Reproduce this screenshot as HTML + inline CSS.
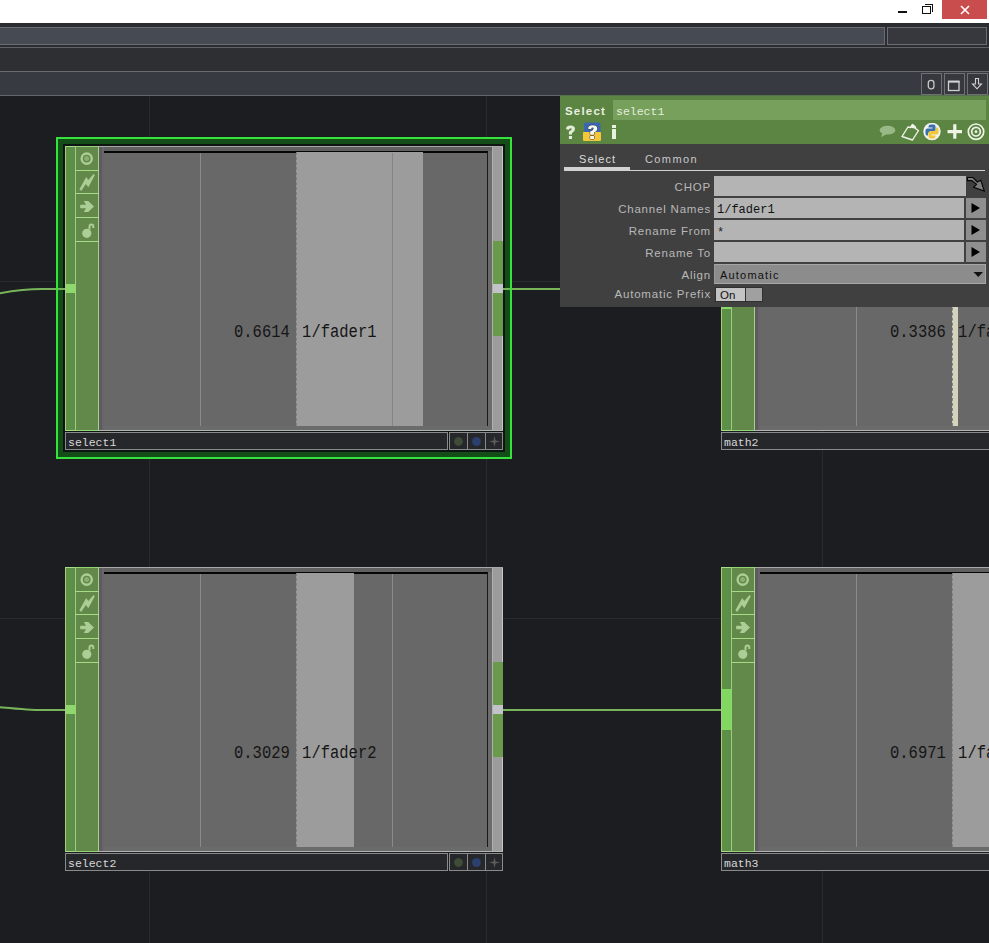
<!DOCTYPE html>
<html><head><meta charset="utf-8">
<style>
*{margin:0;padding:0;box-sizing:border-box}
html,body{width:989px;height:943px;overflow:hidden;background:#1c1d21;font-family:"Liberation Sans",sans-serif;-webkit-font-smoothing:antialiased}
.a{position:absolute}
#title{left:0;top:0;width:989px;height:23px;background:#fff}
.gl{background:#2a2b30}
.node{position:absolute;width:438px;height:304px}
.node .body{position:absolute;left:0;top:0;width:438px;height:285px;background:#6b6b6b;border-top:1px solid #a8a8a8;border-bottom:1px solid #b4b4b4}
.node .ls{position:absolute;left:0;top:0;width:11px;height:285px;background:linear-gradient(90deg,#5e9040 0 3px,#5a9048 3px 6px,#608a50 6px);border:1px solid #a6dc88;border-left-color:#a8c890;border-right:none}
.node .gb{position:absolute;left:34px;top:1px;width:5px;height:283px;background:linear-gradient(90deg,#5c5c60 0 2px,#5e5a58 2px 3px,#68666c 3px)}
.node .is{position:absolute;left:10px;top:0;width:24px;height:285px;background:#62884a;border:1px solid #94d474;border-right-color:#a8d090}
.node .cell{position:absolute;left:10px;width:24px;height:1px;background:#a6dc88}
.node .chart{position:absolute;left:39px;top:5px;width:384px;height:275px;background:#686868;border-top:2px solid #050505;border-right:1px solid #1a1a1a}
.node .tb{position:absolute;left:39px;top:1px;width:388px;height:4px;background:#606060}
.node .rs{position:absolute;left:427px;top:1px;width:11px;height:283px;background:#9c9c9c;border-left:1px solid #b0b0b0;border-right:1px solid #c6c6c6}
.node .lbl{position:absolute;left:0;top:286px;width:383px;height:18px;background:#26272b;border:1px solid #8a8a8a;color:#d8d8d8;font-family:"Liberation Mono",monospace;font-size:11.5px;padding-left:2px;line-height:19px;overflow:hidden}
.node .btn{position:absolute;top:286px;width:19px;height:18px;background:#26272b;border:1px solid #8a8a8a}
.vline{position:absolute;top:0;width:1px;height:273px;background:#8a8a8a}
.bar{position:absolute;top:-1px;height:274px;background:#9c9c9c;border-left:1px dashed #808080}
.val{position:absolute;font-family:"Liberation Mono",monospace;font-size:15.5px;color:#151515;white-space:pre;word-spacing:3px;transform:scaleY(1.2);transform-origin:0 0}
.plab{position:absolute;right:278px;color:#b8b8b8;font-size:11.5px;letter-spacing:0.8px;white-space:pre;text-align:right}
.fld{position:absolute;left:154px;height:20px;background:#b4b4b4}
.arr{position:absolute;left:406px;width:20px;height:20px;background:#8f8f8f}
</style></head><body>
<!-- title bar -->
<div class="a" id="title"></div>
<div class="a" style="left:898px;top:11px;width:9px;height:2px;background:#111"></div>
<div class="a" style="left:925px;top:4px;width:8px;height:8px;border-top:1.5px solid #111;border-right:1.5px solid #111"></div>
<div class="a" style="left:922px;top:6px;width:9px;height:8px;border:1.5px solid #111;background:#fff"></div>
<div class="a" style="left:942px;top:0;width:45px;height:19px;background:#c94d4d"></div>
<svg class="a" style="left:958px;top:4px" width="14" height="12"><path d="M3 2 L11 10 M11 2 L3 10" stroke="#fff" stroke-width="1.6"/></svg>

<!-- toolbar rows -->
<div class="a" style="left:0;top:23px;width:989px;height:25px;background:#2a2c30"></div>
<div class="a" style="left:-2px;top:27px;width:887px;height:18px;background:#464a52;border:1px solid #6a6d73"></div>
<div class="a" style="left:887px;top:27px;width:100px;height:18px;background:#36383e;border:1px solid #6a6d73"></div>
<div class="a" style="left:0;top:47px;width:989px;height:1px;background:#5f6166"></div>
<div class="a" style="left:0;top:48px;width:989px;height:23px;background:#2e2f33"></div>
<div class="a" style="left:0;top:71px;width:989px;height:1px;background:#6a6b6f"></div>
<div class="a" style="left:0;top:72px;width:989px;height:23px;background:#383a42"></div>
<div class="a" style="left:0;top:95px;width:989px;height:1px;background:#64666b"></div>
<div class="a" style="left:921px;top:73px;width:21px;height:22px;border:1px solid #6f7075;background:#36383e"></div>
<div class="a" style="left:944px;top:73px;width:21px;height:22px;border:1px solid #6f7075;background:#36383e"></div>
<div class="a" style="left:967px;top:73px;width:21px;height:22px;border:1px solid #6f7075;background:#36383e"></div>
<svg class="a" style="left:921px;top:73px" width="68" height="22">
<rect x="7.3" y="7.3" width="5.6" height="8.6" rx="2.6" fill="none" stroke="#c8c8cc" stroke-width="1.3"/>
<rect x="27.5" y="8.5" width="10.5" height="9" fill="none" stroke="#d0d0d4" stroke-width="1.3"/>
<rect x="27" y="7.6" width="11.5" height="2" fill="#d0d0d4"/>
<path d="M54.5 5.5 H57.5 V11 H60.5 L56 15.8 L51.5 11 H54.5 Z" fill="none" stroke="#d0d0d4" stroke-width="1.1" stroke-linejoin="miter"/>
</svg>

<!-- grid -->
<div class="a gl" style="left:149px;top:96px;width:1px;height:847px"></div>
<div class="a gl" style="left:486px;top:96px;width:1px;height:847px"></div>
<div class="a gl" style="left:822px;top:96px;width:1px;height:847px"></div>
<div class="a gl" style="left:0;top:281px;width:989px;height:1px"></div>
<div class="a gl" style="left:0;top:618px;width:989px;height:1px"></div>

<!-- selection -->
<div class="a" style="left:56px;top:137px;width:456px;height:322px;background:#134e18"></div>
<div class="a" style="left:63px;top:144px;width:442px;height:308px;background:#0e1512"></div>
<!-- wires -->
<svg class="a" style="left:0;top:96px" width="989" height="847"><path d="M-2 197.5 C20 193.5 30 193 42 193 L66 193" fill="none" stroke="#78b45a" stroke-width="2"/><path d="M503 193 L721 193" stroke="#78b45a" stroke-width="2"/><path d="M-2 611 C20 613 30 614 42 614 L66 614" fill="none" stroke="#78b45a" stroke-width="2"/><path d="M503 614 L721 614" stroke="#78b45a" stroke-width="2"/></svg>
<div class="a" style="left:56px;top:137px;width:456px;height:322px;border:2px solid #36e23c"></div>
<div class="node" style="left:65px;top:146px">
<div class="body"></div>
<div class="tb"></div>
<div class="chart"><div class="vline" style="left:96px"></div><div class="bar" style="left:192px;width:127px"></div><div class="vline" style="left:288px;background:#858585"></div><div class="val" style="left:130px;top:168px">0.6614 1/fader1</div></div>
<div class="rs"></div>
<div class="a" style="left:428px;top:95px;width:10px;height:43px;background:#6a9a4c"></div>
<div class="a" style="left:428px;top:138px;width:10px;height:9px;background:#c2c3c8"></div>
<div class="a" style="left:428px;top:147px;width:10px;height:43px;background:#6a9a4c"></div>
<div class="ls"></div>
<div class="a" style="left:1px;top:138px;width:10px;height:9px;background:#8fd86b"></div>
<div class="is"></div>
<div class="gb"></div>
<div class="cell" style="top:24px"></div>
<div class="cell" style="top:47px"></div>
<div class="cell" style="top:71px"></div>
<div class="cell" style="top:95px"></div>
<svg class="a" style="left:11px;top:1px" width="22" height="96">
<circle cx="10.7" cy="11.6" r="5.1" fill="none" stroke="#abcd96" stroke-width="2.4"/>
<circle cx="10.7" cy="11.6" r="2.5" fill="#abcd96" opacity="0.55"/>
<path d="M3.4 42.2 L10.2 30 L12.3 33 L17.6 27 L18.8 28.3 L12.3 40.2 L9.9 36.9 L5.2 43.9 Z" fill="#abcd96"/>
<path d="M4.5 61.3 Q3.4 59.5 4.5 57.7 H10 L7.8 54 H12.2 L18 59.5 L12.2 65 H7.8 L10 61.3 Z" fill="#abcd96"/>
<circle cx="10.8" cy="86.3" r="4.6" fill="#abcd96"/>
<path d="M13.5 82.5 V79.5 A1.9 1.9 0 0 1 17.3 79.5 V81" fill="none" stroke="#abcd96" stroke-width="2"/>
</svg>
<div class="lbl">select1</div>
<div class="btn" style="left:384px"></div><div class="btn" style="left:402px"></div><div class="btn" style="left:420px;width:18px"></div>
<div class="a" style="left:389px;top:291px;width:9px;height:9px;border-radius:50%;background:radial-gradient(circle,#3e4c38 50%,#30382e 100%)"></div>
<div class="a" style="left:407px;top:291px;width:9px;height:9px;border-radius:50%;background:radial-gradient(circle,#2c4070 50%,#28324a 100%)"></div>
<svg class="a" style="left:423px;top:289px" width="13" height="13"><path d="M6.5 1 L7.6 5.4 L12 6.5 L7.6 7.6 L6.5 12 L5.4 7.6 L1 6.5 L5.4 5.4 Z" fill="#5a5a5a"/></svg>
</div>
<div class="node" style="left:65px;top:567px">
<div class="body"></div>
<div class="tb"></div>
<div class="chart"><div class="vline" style="left:96px"></div><div class="bar" style="left:192px;width:58px"></div><div class="vline" style="left:288px"></div><div class="val" style="left:130px;top:168px">0.3029 1/fader2</div></div>
<div class="rs"></div>
<div class="a" style="left:428px;top:95px;width:10px;height:43px;background:#6a9a4c"></div>
<div class="a" style="left:428px;top:138px;width:10px;height:9px;background:#c2c3c8"></div>
<div class="a" style="left:428px;top:147px;width:10px;height:43px;background:#6a9a4c"></div>
<div class="ls"></div>
<div class="a" style="left:1px;top:138px;width:10px;height:9px;background:#8fd86b"></div>
<div class="is"></div>
<div class="gb"></div>
<div class="cell" style="top:24px"></div>
<div class="cell" style="top:47px"></div>
<div class="cell" style="top:71px"></div>
<div class="cell" style="top:95px"></div>
<svg class="a" style="left:11px;top:1px" width="22" height="96">
<circle cx="10.7" cy="11.6" r="5.1" fill="none" stroke="#abcd96" stroke-width="2.4"/>
<circle cx="10.7" cy="11.6" r="2.5" fill="#abcd96" opacity="0.55"/>
<path d="M3.4 42.2 L10.2 30 L12.3 33 L17.6 27 L18.8 28.3 L12.3 40.2 L9.9 36.9 L5.2 43.9 Z" fill="#abcd96"/>
<path d="M4.5 61.3 Q3.4 59.5 4.5 57.7 H10 L7.8 54 H12.2 L18 59.5 L12.2 65 H7.8 L10 61.3 Z" fill="#abcd96"/>
<circle cx="10.8" cy="86.3" r="4.6" fill="#abcd96"/>
<path d="M13.5 82.5 V79.5 A1.9 1.9 0 0 1 17.3 79.5 V81" fill="none" stroke="#abcd96" stroke-width="2"/>
</svg>
<div class="lbl">select2</div>
<div class="btn" style="left:384px"></div><div class="btn" style="left:402px"></div><div class="btn" style="left:420px;width:18px"></div>
<div class="a" style="left:389px;top:291px;width:9px;height:9px;border-radius:50%;background:radial-gradient(circle,#3e4c38 50%,#30382e 100%)"></div>
<div class="a" style="left:407px;top:291px;width:9px;height:9px;border-radius:50%;background:radial-gradient(circle,#2c4070 50%,#28324a 100%)"></div>
<svg class="a" style="left:423px;top:289px" width="13" height="13"><path d="M6.5 1 L7.6 5.4 L12 6.5 L7.6 7.6 L6.5 12 L5.4 7.6 L1 6.5 L5.4 5.4 Z" fill="#5a5a5a"/></svg>
</div>
<div class="node" style="left:721px;top:146px">
<div class="body"></div>
<div class="tb"></div>
<div class="chart"><div class="vline" style="left:96px"></div><div class="bar" style="left:192px;width:6px;background:#d4d4bc"></div><div class="val" style="left:130px;top:168px">0.3386 1/fader1</div></div>
<div class="rs"></div>
<div class="ls"></div>
<div class="a" style="left:1px;top:122px;width:10px;height:41px;background:#88d868"></div>
<div class="is"></div>
<div class="gb"></div>
<div class="cell" style="top:24px"></div>
<div class="cell" style="top:47px"></div>
<div class="cell" style="top:71px"></div>
<div class="cell" style="top:95px"></div>
<svg class="a" style="left:11px;top:1px" width="22" height="96">
<circle cx="10.7" cy="11.6" r="5.1" fill="none" stroke="#abcd96" stroke-width="2.4"/>
<circle cx="10.7" cy="11.6" r="2.5" fill="#abcd96" opacity="0.55"/>
<path d="M3.4 42.2 L10.2 30 L12.3 33 L17.6 27 L18.8 28.3 L12.3 40.2 L9.9 36.9 L5.2 43.9 Z" fill="#abcd96"/>
<path d="M4.5 61.3 Q3.4 59.5 4.5 57.7 H10 L7.8 54 H12.2 L18 59.5 L12.2 65 H7.8 L10 61.3 Z" fill="#abcd96"/>
<circle cx="10.8" cy="86.3" r="4.6" fill="#abcd96"/>
<path d="M13.5 82.5 V79.5 A1.9 1.9 0 0 1 17.3 79.5 V81" fill="none" stroke="#abcd96" stroke-width="2"/>
</svg>
<div class="lbl">math2</div>
</div>
<div class="node" style="left:721px;top:567px">
<div class="body"></div>
<div class="tb"></div>
<div class="chart"><div class="vline" style="left:96px"></div><div class="bar" style="left:192px;width:300px"></div><div class="val" style="left:130px;top:168px">0.6971 1/fader2</div></div>
<div class="rs"></div>
<div class="ls"></div>
<div class="a" style="left:1px;top:122px;width:10px;height:41px;background:#80d860"></div>
<div class="is"></div>
<div class="gb"></div>
<div class="cell" style="top:24px"></div>
<div class="cell" style="top:47px"></div>
<div class="cell" style="top:71px"></div>
<div class="cell" style="top:95px"></div>
<svg class="a" style="left:11px;top:1px" width="22" height="96">
<circle cx="10.7" cy="11.6" r="5.1" fill="none" stroke="#abcd96" stroke-width="2.4"/>
<circle cx="10.7" cy="11.6" r="2.5" fill="#abcd96" opacity="0.55"/>
<path d="M3.4 42.2 L10.2 30 L12.3 33 L17.6 27 L18.8 28.3 L12.3 40.2 L9.9 36.9 L5.2 43.9 Z" fill="#abcd96"/>
<path d="M4.5 61.3 Q3.4 59.5 4.5 57.7 H10 L7.8 54 H12.2 L18 59.5 L12.2 65 H7.8 L10 61.3 Z" fill="#abcd96"/>
<circle cx="10.8" cy="86.3" r="4.6" fill="#abcd96"/>
<path d="M13.5 82.5 V79.5 A1.9 1.9 0 0 1 17.3 79.5 V81" fill="none" stroke="#abcd96" stroke-width="2"/>
</svg>
<div class="lbl">math3</div>
</div>

<!-- parameter panel -->
<div class="a" style="left:560px;top:95px;width:429px;height:1px;background:#55704a"></div>
<div class="a" style="left:560px;top:96px;width:429px;height:211px;background:#404040">
<div class="a" style="left:0;top:0;width:429px;height:48px;background:#5c8443"></div>
<div class="a" style="left:5px;top:104px;font-weight:bold;font-size:11.5px;color:#e8f0e0;top:9px;letter-spacing:1.2px">Select</div>
<div class="a" style="left:53px;top:4px;width:373px;height:20px;background:#76a05c"></div>
<div class="a" style="left:56px;top:8px;font-family:'Liberation Mono',monospace;font-size:11.5px;color:#e4eedc;line-height:16px">select1</div>
<!-- header icons -->
<svg class="a" style="left:0;top:24px" width="18" height="24"><path d="M6 9.2 Q6 5.5 10.5 5.5 Q15 5.5 15 9 Q15 11.6 12 12.9 V14.6 H8.9 V11.4 Q11.7 10.4 11.7 9 Q11.7 8.2 10.5 8.2 Q9.1 8.2 9.1 9.7 Z M8.9 16 H12 V19 H8.9 Z" fill="#e2ecd6"/></svg>
<svg class="a" style="left:18px;top:24px" width="28" height="24">
<rect x="6" y="2.5" width="16.5" height="10" rx="2" fill="#3b66b4"/>
<rect x="5" y="12" width="18" height="9" rx="1" fill="#f3c63c"/>
<path d="M10 8.8 Q10 5.2 14.5 5.2 Q19.3 5.2 19.3 8.6 Q19.3 11.2 16 12.6 V14.8 H12.2 V11.6 Q15.6 10.2 15.6 8.7 Q15.6 7.6 14.5 7.6 Q13.2 7.6 13.2 9.2 Z M12.2 16 H16 V19 H12.2 Z" fill="#f4f8f0" stroke="#2a3220" stroke-width="0.9" paint-order="stroke"/>
</svg>
<div class="a" style="left:52px;top:29px;width:4px;height:3px;background:#e8f2dc"></div>
<div class="a" style="left:52px;top:33px;width:4px;height:10px;background:#e8f2dc"></div>
<svg class="a" style="left:318px;top:27px" width="111" height="20">
<ellipse cx="9.5" cy="7.2" rx="7.8" ry="4.4" fill="#98b986"/>
<path d="M4.5 9.5 L3 14 L9 11 Z" fill="#98b986"/>
<path d="M24 13.5 L30 4 L32.5 4.5 L34.5 1.5 L37 3.5 L38 6 L40.5 7.5 L34.5 17 Z" fill="none" stroke="#f0f4ea" stroke-width="1.4" stroke-linejoin="round"/>
<path d="M32.5 4.5 L34.5 1.5 L37 3.5 L38 6 Z" fill="#f0f4ea"/>
<circle cx="54" cy="8.5" r="8.7" fill="#eef2ea"/>
<g transform="translate(54 8.5)">
<path d="M-1 -7 H1.5 Q3.5 -7 3.5 -5 V-1.5 Q3.5 0.5 1.5 0.5 H-2 Q-4 0.5 -4 2.5 V4 H-5 Q-6.5 4 -6.5 1 V-1 Q-6.5 -3 -4.5 -3 H0.5 V-4 H-3.5 V-5 Q-3.5 -7 -1 -7 Z" fill="#3b6fb0"/>
<path d="M1 7 H-1.5 Q-3.5 7 -3.5 5 V1.5 Q-3.5 -0.5 -1.5 -0.5 H2 Q4 -0.5 4 -2.5 V-4 H5 Q6.5 -4 6.5 -1 V1 Q6.5 3 4.5 3 H-0.5 V4 H3.5 V5 Q3.5 7 1 7 Z" fill="#f2c73a"/>
</g>
<rect x="69.5" y="7" width="14.5" height="3.2" fill="#eef4e8"/>
<rect x="75.2" y="1.2" width="3.2" height="14.5" fill="#eef4e8"/>
<circle cx="98" cy="8.7" r="7.7" fill="none" stroke="#eef4e8" stroke-width="1.7"/>
<circle cx="98" cy="8.7" r="4.3" fill="none" stroke="#eef4e8" stroke-width="1.7"/>
<circle cx="98" cy="8.7" r="1.4" fill="#eef4e8"/>
</svg>
<!-- tabs -->
<div class="a" style="left:19px;top:57px;font-size:11px;color:#dcdcdc;letter-spacing:1.1px">Select</div>
<div class="a" style="left:85px;top:57px;font-size:11px;color:#c8c8c8;letter-spacing:1.4px">Common</div>
<div class="a" style="left:4px;top:71px;width:66px;height:3px;background:#d2d2d2"></div>
<div class="a" style="left:4px;top:74px;width:421px;height:1px;background:#d2d2d2"></div>
<!-- params -->
<div class="plab" style="top:85px">CHOP</div>
<div class="plab" style="top:107px">Channel Names</div>
<div class="plab" style="top:129px">Rename From</div>
<div class="plab" style="top:151px">Rename To</div>
<div class="plab" style="top:173px">Align</div>
<div class="plab" style="top:192px">Automatic Prefix</div>
<div class="fld" style="top:80px;width:252px"></div>
<div class="fld" style="top:102px;width:250px"></div>
<div class="fld" style="top:124px;width:250px"></div>
<div class="fld" style="top:146px;width:250px"></div>
<div class="a" style="left:154px;top:168px;width:272px;height:20px;background:#8c8c8c;border:1px solid #a6a6a6;border-left-color:#9a9a9a"></div>
<div class="a" style="left:157px;top:105px;font-family:'Liberation Mono',monospace;font-size:12px;color:#111;line-height:18px">1/fader1</div>
<div class="a" style="left:157px;top:128px;font-family:'Liberation Mono',monospace;font-size:12px;color:#222;line-height:18px">*</div>
<div class="a" style="left:160px;top:173px;font-size:11px;color:#111;letter-spacing:1.2px">Automatic</div>
<svg class="a" style="left:406px;top:80px" width="20" height="110">
<path d="M1.5 1.5 L7 1.5 L11.3 6 L14.8 4.3 L18.3 15 L7.6 11.3 L10.6 8.2 L5.8 4.6 L1.5 4.6 Z" fill="#7c7c7c" stroke="#050505" stroke-width="1.1" stroke-linejoin="miter"/>
<rect x="0" y="22" width="20" height="20" fill="#8f8f8f"/>
<rect x="0" y="44" width="20" height="20" fill="#8f8f8f"/>
<rect x="0" y="66" width="20" height="20" fill="#8f8f8f"/>
<path d="M5.5 27 L14 32 L5.5 37 Z M5.5 49 L14 54 L5.5 59 Z M5.5 71 L14 76 L5.5 81 Z" fill="#000"/>
<path d="M7.5 96 L17 96 L12.3 101 Z" fill="#111"/>
</svg>
<div class="a" style="left:155px;top:191px;width:48px;height:15px;background:#303030"></div>
<div class="a" style="left:156px;top:192px;width:29px;height:13px;background:#c4c4c4"></div>
<div class="a" style="left:186px;top:192px;width:16px;height:13px;background:#a0a0a0"></div>
<div class="a" style="left:160px;top:192px;font-size:11.5px;color:#111;line-height:14px">On</div>
</div>

</body></html>
